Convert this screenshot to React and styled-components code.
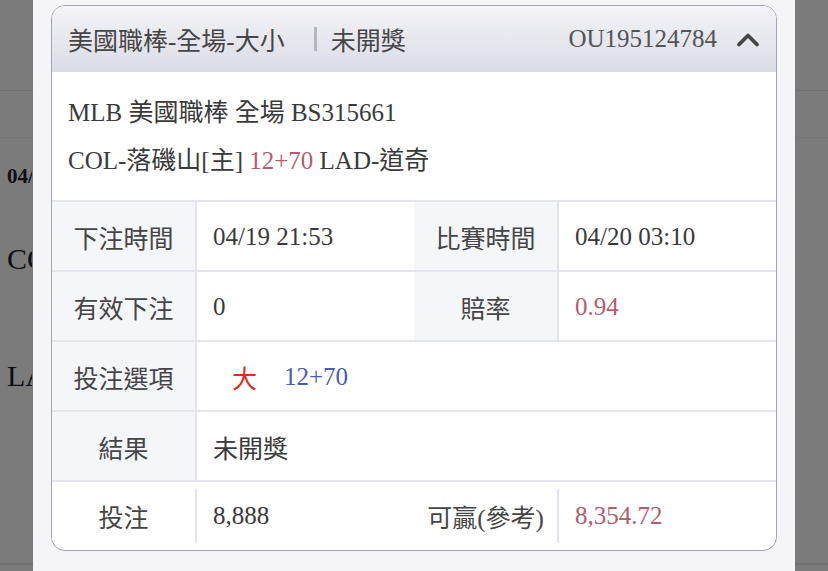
import React from "react";
import styled, { createGlobalStyle } from "styled-components";

const GlobalStyle = createGlobalStyle`
  html, body {
    margin: 0;
    padding: 0;
  }
  body {
    font-family: "Liberation Serif", "Noto Sans CJK TC", serif;
    background: #f6f6f6;
  }
  #root {
    width: 828px;
    height: 571px;
    overflow: hidden;
    position: relative;
  }
`;

/* page that sits behind the dialog */
const Page = styled.div`
  width: 828px;
  height: 571px;
  background: #f6f6f6;
  color: #1c1c2a;
`;

const PageTop = styled.div`
  height: 90px;
  border-bottom: 1px solid #e2e2e2;
`;

const PageTabs = styled.div`
  height: 46px;
  border-bottom: 1px solid #ececec;
`;

const PageItem = styled.div`
  height: 427px;
  box-sizing: border-box;
  border-bottom: 2px solid #e2e2e2;
`;

/* only the strip left of the dialog is ever visible */
const PageColumn = styled.div`
  width: 32px;
  overflow: hidden;
  padding: 24px 0 0 7px;
  box-sizing: border-box;
  white-space: nowrap;

  .date {
    font-weight: 700;
    font-size: 21px;
    line-height: 28px;
  }
  .team {
    font-size: 30px;
    line-height: 40px;
    margin-top: 49px;
  }
  .team + .team {
    margin-top: 77px;
  }
`;

const Overlay = styled.div`
  position: absolute;
  inset: 0;
  background: rgba(0, 0, 0, 0.5);
  display: flex;
  justify-content: center;
`;

const Panel = styled.div`
  width: 762px;
  height: 100%;
  box-sizing: border-box;
  padding: 5px 18px 0;
  background: #f5f5f7;
`;

const Card = styled.div`
  border: 1.5px solid #a3a3ba;
  border-radius: 14px;
  overflow: hidden;
  background: #fff;
  color: #3a3a3a;
  font-size: 25px;
`;

const Header = styled.div`
  display: flex;
  align-items: center;
  height: 66px;
  padding: 0 16px;
  background: linear-gradient(#f3f3f8, #dcdce6);
  color: #454545;
`;

const Divider = styled.span`
  width: 3px;
  height: 24px;
  margin: 0 14px 0 29px;
  background: #b5b5bd;
`;

const OrderNo = styled.span`
  margin-left: auto;
  color: #555;
`;

const Chevron = styled.svg`
  width: 24px;
  height: 15px;
  margin-left: 19px;
`;

const Info = styled.div`
  padding: 17px 16px 15px;
  line-height: 48px;
  border-bottom: 2px solid #e4e4ec;
`;

const Line = styled.div`
  white-space: nowrap;
`;

const Muted = styled.span`
  color: ${(p) => p.$tone || "#b65c6b"};
  margin-left: ${(p) => p.$gap || 0}px;
`;

const Row = styled.div`
  display: grid;
  grid-template-columns: ${(p) => (p.$wide ? "145px 1fr" : "145px 217px 143px 1fr")};
  height: ${(p) => (p.$last ? "68px" : "70px")};
  box-sizing: border-box;
  border-bottom: ${(p) => (p.$last ? "none" : "2px solid #e4e4ec")};

  & > * {
    margin: ${(p) => (p.$last ? "7px 0" : "0")};
    padding-top: ${(p) => (p.$last ? "0" : "2px")};
  }
`;

const Label = styled.div`
  display: flex;
  align-items: center;
  justify-content: center;
  background: ${(p) => (p.$plain ? "#fff" : "#f5f6fa")};
  color: #454545;
  box-sizing: border-box;
  border-right: ${(p) => (p.$divider ? "2px solid #e4e4ec" : "none")};
  white-space: nowrap;
`;

const Value = styled.div`
  display: flex;
  align-items: center;
  padding-left: 16px;
  box-sizing: border-box;
  border-left: ${(p) => (p.$divider ? "2px solid #e4e4ec" : "none")};
  color: ${(p) => p.$color || "#3a3a3a"};
  white-space: nowrap;
`;

const App = () => {
  return (
    <>
      <GlobalStyle />
      <Page>
        <PageTop />
        <PageTabs />
        <PageItem>
          <PageColumn>
            <div className="date">04/19 21:53</div>
            <div className="team">COL-落磯山</div>
            <div className="team">LAD-道奇</div>
          </PageColumn>
        </PageItem>
      </Page>
      <Overlay>
        <Panel>
          <Card>
            <Header>
              <span>美國職棒-全場-大小</span>
              <Divider />
              <span>未開獎</span>
              <OrderNo>OU195124784</OrderNo>
              <Chevron viewBox="0 0 24 15">
                <polyline
                  points="3,12.5 12,3.5 21,12.5"
                  fill="none"
                  stroke="#454545"
                  strokeWidth="3.8"
                  strokeLinecap="round"
                  strokeLinejoin="round"
                />
              </Chevron>
            </Header>
            <Info>
              <Line>MLB 美國職棒 全場 BS315661</Line>
              <Line>
                COL-落磯山[主] <Muted>12+70</Muted> LAD-道奇
              </Line>
            </Info>
            <Row>
              <Label $divider>下注時間</Label>
              <Value>04/19 21:53</Value>
              <Label>比賽時間</Label>
              <Value $divider>04/20 03:10</Value>
            </Row>
            <Row>
              <Label $divider>有效下注</Label>
              <Value>0</Value>
              <Label>賠率</Label>
              <Value $divider $color="#b65c6b">0.94</Value>
            </Row>
            <Row $wide>
              <Label $divider>投注選項</Label>
              <Value>
                <Muted $tone="#d2321f" $gap={19}>大</Muted>
                <Muted $tone="#4b5ab3" $gap={27}>12+70</Muted>
              </Value>
            </Row>
            <Row $wide>
              <Label $divider>結果</Label>
              <Value>未開獎</Value>
            </Row>
            <Row $last>
              <Label $plain $divider>投注</Label>
              <Value>8,888</Value>
              <Label $plain>可贏(參考)</Label>
              <Value $divider $color="#b65c6b">8,354.72</Value>
            </Row>
          </Card>
        </Panel>
      </Overlay>
    </>
  );
};

export default App;
